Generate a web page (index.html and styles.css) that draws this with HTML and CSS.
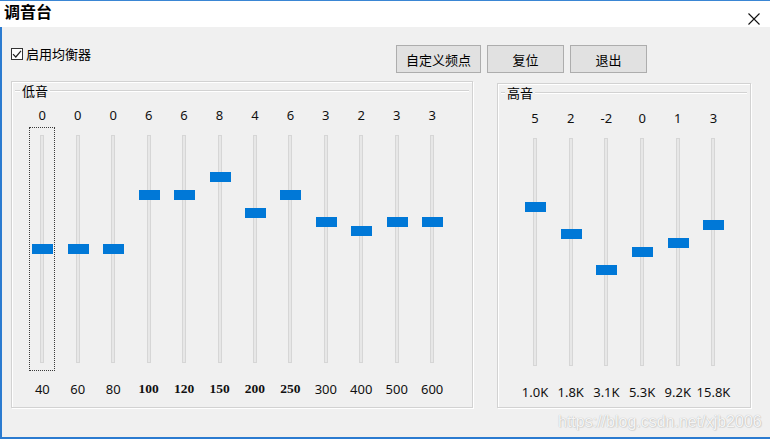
FILE: index.html
```html
<!DOCTYPE html>
<html lang="zh-CN">
<head>
<meta charset="utf-8">
<title>调音台</title>
<link rel="stylesheet" href="styles.css">
</head>
<body>
<div class="window">
  <div class="titlebar">
    <span class="title">调音台</span>
    <svg class="close" width="12" height="12" viewBox="0 0 12 12"><path d="M0.5 0.5 L11.5 11.5 M11.5 0.5 L0.5 11.5" stroke="#111" stroke-width="1.1" fill="none"/></svg>
  </div>
  <div class="client">
    <div class="toolbar">
      <label class="check">
        <span class="box"><svg width="10" height="10" viewBox="0 0 10 10"><path d="M1 5.2 L3.8 8 L9 1.8" stroke="#222" stroke-width="1.2" fill="none"/></svg></span>
        <span class="check-text">启用均衡器</span>
      </label>
      <div class="buttons">
        <button class="btn btn-wide">自定义频点</button>
        <button class="btn">复位</button>
        <button class="btn">退出</button>
      </div>
    </div>
    <div class="panels">
      <section class="panel panel-low">
        <div class="legend-row"><span class="seg"></span><span class="legend">低音</span><span class="line"></span></div>
        <div class="bands bands-low">
          <div class="band"><div class="val">0</div><div class="slider focus"><div class="track"></div><div class="thumb" style="top:117px"></div></div><div class="freq">40</div></div>
          <div class="band"><div class="val">0</div><div class="slider"><div class="track"></div><div class="thumb" style="top:117px"></div></div><div class="freq">60</div></div>
          <div class="band"><div class="val">0</div><div class="slider"><div class="track"></div><div class="thumb" style="top:117px"></div></div><div class="freq">80</div></div>
          <div class="band"><div class="val">6</div><div class="slider"><div class="track"></div><div class="thumb" style="top:63px"></div></div><div class="freq serif">100</div></div>
          <div class="band"><div class="val">6</div><div class="slider"><div class="track"></div><div class="thumb" style="top:63px"></div></div><div class="freq serif">120</div></div>
          <div class="band"><div class="val">8</div><div class="slider"><div class="track"></div><div class="thumb" style="top:45px"></div></div><div class="freq serif">150</div></div>
          <div class="band"><div class="val">4</div><div class="slider"><div class="track"></div><div class="thumb" style="top:81px"></div></div><div class="freq serif">200</div></div>
          <div class="band"><div class="val">6</div><div class="slider"><div class="track"></div><div class="thumb" style="top:63px"></div></div><div class="freq serif">250</div></div>
          <div class="band"><div class="val">3</div><div class="slider"><div class="track"></div><div class="thumb" style="top:90px"></div></div><div class="freq">300</div></div>
          <div class="band"><div class="val">2</div><div class="slider"><div class="track"></div><div class="thumb" style="top:99px"></div></div><div class="freq">400</div></div>
          <div class="band"><div class="val">3</div><div class="slider"><div class="track"></div><div class="thumb" style="top:90px"></div></div><div class="freq">500</div></div>
          <div class="band"><div class="val">3</div><div class="slider"><div class="track"></div><div class="thumb" style="top:90px"></div></div><div class="freq">600</div></div>
        </div>
      </section>
      <section class="panel panel-high">
        <div class="legend-row"><span class="seg seg-short"></span><span class="legend">高音</span><span class="line"></span></div>
        <div class="bands bands-high">
          <div class="band"><div class="val">5</div><div class="slider"><div class="track"></div><div class="thumb" style="top:72px"></div></div><div class="freq">1.0K</div></div>
          <div class="band"><div class="val">2</div><div class="slider"><div class="track"></div><div class="thumb" style="top:99px"></div></div><div class="freq">1.8K</div></div>
          <div class="band"><div class="val">-2</div><div class="slider"><div class="track"></div><div class="thumb" style="top:135px"></div></div><div class="freq">3.1K</div></div>
          <div class="band"><div class="val">0</div><div class="slider"><div class="track"></div><div class="thumb" style="top:117px"></div></div><div class="freq">5.3K</div></div>
          <div class="band"><div class="val">1</div><div class="slider"><div class="track"></div><div class="thumb" style="top:108px"></div></div><div class="freq">9.2K</div></div>
          <div class="band"><div class="val">3</div><div class="slider"><div class="track"></div><div class="thumb" style="top:90px"></div></div><div class="freq">15.8K</div></div>
        </div>
      </section>
    </div>
    <div class="watermark">https://blog.csdn.net/xjb2006</div>
  </div>
</div>
</body>
</html>
```
FILE: styles.css
```css
* { box-sizing: border-box; }
html, body { margin: 0; padding: 0; }
body {
  width: 770px;
  height: 439px;
  overflow: hidden;
  background: #f0f0f0;
  font-family: "Noto Sans", "Noto Sans CJK SC", sans-serif;
  color: #000;
}
.window {
  width: 770px;
  height: 439px;
  display: flex;
  flex-direction: column;
  border-top: 1px solid #3a86d4;
}
.titlebar {
  height: 26px;
  background: #fff;
  display: flex;
  align-items: flex-start;
  justify-content: space-between;
  padding: 0 10px 0 4px;
}
.title {
  font-family: "Noto Sans CJK SC", sans-serif;
  font-weight: 700;
  font-size: 16px;
  line-height: 20px;
}
.close { margin-top: 12px; }
.client {
  position: relative;
  flex: 1;
  background: #f0f0f0;
  border-left: 2px solid #2b7bd0;
  border-bottom: 2px solid #2b7bd0;
}
.toolbar {
  height: 54px;
  display: flex;
  align-items: flex-start;
  justify-content: space-between;
  padding: 0 123px 0 9px;
}
.check {
  display: flex;
  align-items: center;
  height: 14px;
  margin-top: 20px;
}
.box {
  width: 12px;
  height: 12px;
  border: 1px solid #333;
  background: #fff;
  display: flex;
  align-items: center;
  justify-content: center;
}
.check-text {
  font-family: "Noto Sans CJK SC", sans-serif;
  font-size: 13px;
  margin-left: 3px;
  line-height: 14px;
}
.buttons {
  display: flex;
  gap: 6px;
  margin-top: 18px;
}
.btn {
  width: 77px;
  height: 28px;
  background: #e1e1e1;
  border: 1px solid #adadad;
  font-family: "Noto Sans CJK SC", sans-serif;
  font-size: 13px;
  color: #000;
  padding: 0;
  margin: 0;
}
.btn-wide { width: 85px; }
.panels {
  display: flex;
  align-items: flex-start;
  gap: 24px;
  margin-left: 9px;
}
.panel {
  border: 1px solid #d2d2d2;
  box-shadow: inset 1px 1px 0 #fff, 1px 1px 0 #fff;
}
.panel-low { width: 462px; height: 327px; }
.panel-high { width: 254px; height: 325px; margin-top: 2px; }
.legend-row {
  display: flex;
  align-items: center;
  height: 16px;
  margin-top: 1px;
  padding: 0 3px;
}
.seg, .line {
  height: 2px;
  border-top: 1px solid #d2d2d2;
  border-bottom: 1px solid #fff;
}
.seg { width: 5px; }
.seg-short { width: 4px; }
.line { flex: 1; }
.legend {
  font-family: "Noto Sans CJK SC", sans-serif;
  font-size: 13px;
  line-height: 16px;
  margin: 0 2px;
}
.bands { display: grid; }
.bands-low {
  grid-template-columns: repeat(12, 35.45px);
  padding-left: 12.6px;
  margin-top: 8px;
}
.bands-high {
  grid-template-columns: repeat(6, 35.7px);
  padding-left: 19.2px;
  margin-top: 9px;
}
.band {
  display: flex;
  flex-direction: column;
  align-items: center;
}
.val, .freq {
  height: 16px;
  line-height: 16px;
  font-size: 13px;
  color: #111;
  white-space: nowrap;
}
.slider {
  position: relative;
  width: 26px;
  height: 244px;
  margin: 4px 0 10px;
  padding-top: 8px;
}
.focus { outline: 1px dotted #3a3a3a; outline-offset: -1px; }
.track {
  width: 4px;
  height: 228px;
  margin: 0 auto;
  background: #e7e7e7;
  border: 1px solid #d6d6d6;
}
.thumb {
  position: absolute;
  left: 3px;
  width: 21px;
  height: 10px;
  background: #0078d7;
}
.serif {
  font-family: "Liberation Serif", serif;
  font-weight: 700;
  font-size: 13.5px;
}
.watermark {
  position: absolute;
  left: 556px;
  top: 385px;
  font-family: "Liberation Sans", Arial, sans-serif;
  font-size: 16px;
  line-height: 20px;
  color: rgba(255, 255, 255, 0.9);
  text-shadow: 0 0 1px rgba(0, 0, 0, 0.3), 1px 1px 1px rgba(0, 0, 0, 0.08);
  white-space: nowrap;
}
```
